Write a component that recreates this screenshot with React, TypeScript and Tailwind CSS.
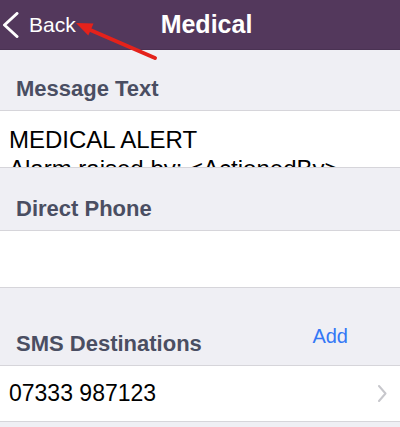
import React from "react";

const font = { fontFamily: '"Liberation Sans", Arial, sans-serif' };

const SectionHeader = ({ title, height, right }: { title: string; height: string; right?: React.ReactNode }) => (
  <div className={`flex items-end justify-between pl-4 pr-[52px] pb-[8px] ${height}`}>
    <span className="text-[22px] leading-[26px] font-bold text-[#4a4e62]">{title}</span>
    {right}
  </div>
);

const Divider = () => <div className="h-px bg-[#d6d5da]" />;

export default function App() {
  return (
    <div className="relative w-[400px] h-[427px] overflow-hidden bg-[#efeff4]" style={font}>
      {/* Nav bar */}
      <div className="relative flex items-center h-[50px] bg-[#53385c] border-b border-[#4a3253]">
        <div className="flex items-center gap-[10px] pl-[2px] text-white">
          <svg width="17" height="26" viewBox="0 0 17 26" fill="none">
            <path d="M15 1.5 L2.5 13 L15 24.5" stroke="white" strokeWidth="3" strokeLinecap="round" strokeLinejoin="round" />
          </svg>
          <span className="text-[21px] leading-none">Back</span>
        </div>
        <span className="absolute left-0 right-0 text-center text-[25px] font-bold text-white leading-none pl-[13px]">
          Medical
        </span>
      </div>

      <SectionHeader title="Message Text" height="h-[60px]" />
      <Divider />
      <div className="h-[56px] overflow-hidden bg-white pl-[9px] pt-[14px] text-[24px] leading-[29px] text-black">
        <div>MEDICAL ALERT</div>
        <div>Alarm raised by: &lt;ActionedBy&gt;</div>
      </div>
      <Divider />

      <SectionHeader title="Direct Phone" height="h-[62px]" />
      <Divider />
      <div className="h-[56px] bg-white" />
      <Divider />

      <SectionHeader
        title="SMS Destinations"
        height="h-[77px]"
        right={<span className="mb-[9px] text-[20px] leading-[24px] text-[#3478f6]">Add</span>}
      />
      <Divider />
      <div className="flex h-[55px] items-center justify-between bg-white pl-[9px] pr-[13px]">
        <span className="text-[23px] text-black">07333 987123</span>
        <svg width="9" height="17" viewBox="0 0 9 17" fill="none">
          <path d="M1 1 L7.5 8.5 L1 16" stroke="#c7c7cc" strokeWidth="2" strokeLinecap="round" strokeLinejoin="round" />
        </svg>
      </div>
      <Divider />

      {/* Red annotation arrow */}
      <svg className="absolute left-0 top-0 pointer-events-none" width="400" height="427" viewBox="0 0 400 427">
        <line x1="155" y1="58" x2="88" y2="29" stroke="#e4221b" strokeWidth="4" strokeLinecap="round" />
        <polygon points="76,23 88.3,35.5 93.5,23.5" fill="#e4221b" />
      </svg>
    </div>
  );
}
